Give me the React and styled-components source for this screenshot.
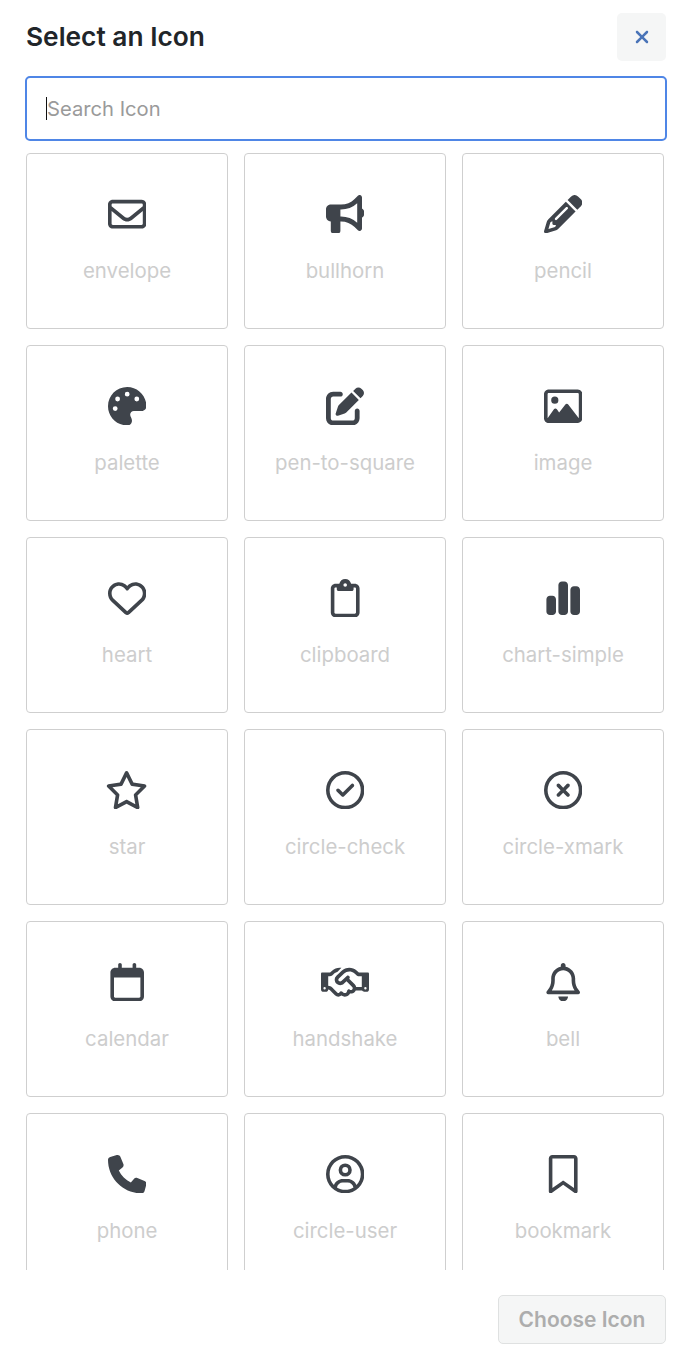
import React from "react";
import styled, { createGlobalStyle } from "styled-components";
import {
  FaRegEnvelope,
  FaBullhorn,
  FaPencil,
  FaPalette,
  FaPenToSquare,
  FaRegImage,
  FaRegHeart,
  FaRegClipboard,
  FaChartSimple,
  FaRegStar,
  FaRegCircleCheck,
  FaRegCircleXmark,
  FaRegCalendar,
  FaRegHandshake,
  FaRegBell,
  FaPhone,
  FaRegCircleUser,
  FaRegBookmark,
  FaXmark,
} from "react-icons/fa6";

// ratio: glyph width / height, only the two wider-than-square icons need it
const icons = [
  ["envelope", FaRegEnvelope],
  ["bullhorn", FaBullhorn],
  ["pencil", FaPencil],
  ["palette", FaPalette],
  ["pen-to-square", FaPenToSquare],
  ["image", FaRegImage],
  ["heart", FaRegHeart],
  ["clipboard", FaRegClipboard],
  ["chart-simple", FaChartSimple],
  ["star", FaRegStar, 1.125],
  ["circle-check", FaRegCircleCheck],
  ["circle-xmark", FaRegCircleXmark],
  ["calendar", FaRegCalendar],
  ["handshake", FaRegHandshake, 1.25],
  ["bell", FaRegBell],
  ["phone", FaPhone],
  ["circle-user", FaRegCircleUser],
  ["bookmark", FaRegBookmark],
];

export default function App() {
  return (
    <Modal>
      <GlobalStyle />
      <Header>
        <Title>Select an Icon</Title>
        <CloseButton aria-label="Close">
          <FaXmark />
        </CloseButton>
      </Header>
      <SearchBox>
        <SearchInput placeholder="Search Icon" readOnly />
        <Caret />
      </SearchBox>
      <IconList>
        <IconGrid>
          {icons.map(([name, Icon, ratio]) => (
            <IconCard key={name}>
              <IconWrap $ratio={ratio || 1}>
                <Icon />
              </IconWrap>
              <IconName>{name}</IconName>
            </IconCard>
          ))}
        </IconGrid>
      </IconList>
      <Footer>
        <ChooseButton>Choose Icon</ChooseButton>
      </Footer>
    </Modal>
  );
}

const GlobalStyle = createGlobalStyle`
  html, body {
    margin: 0;
    padding: 0;
    background: #fff;
  }
  * {
    box-sizing: border-box;
  }
`;

const Modal = styled.div`
  width: 696px;
  height: 1362px;
  padding: 13px 30px 0 26px;
  background: #fff;
  font-family: Inter, "Liberation Sans", sans-serif;
  overflow: hidden;
`;

const Header = styled.div`
  display: flex;
  align-items: center;
  justify-content: space-between;
  height: 48px;
  margin-bottom: 15px;
`;

const Title = styled.h2`
  margin: 0 0 2px;
  font-size: 26.3px;
  font-weight: 600;
  color: #212529;
`;

const CloseButton = styled.button`
  display: flex;
  align-items: center;
  justify-content: center;
  width: 49px;
  height: 48px;
  padding: 0;
  border: none;
  border-radius: 5px;
  background: #f5f6f6;
  color: #4a74b8;
  font-size: 20px;
`;

const SearchBox = styled.div`
  position: relative;
  width: 642px;
  height: 65px;
  margin-left: -1px;
  margin-bottom: 12px;
`;

const SearchInput = styled.input`
  display: block;
  width: 100%;
  height: 100%;
  padding: 0 20px;
  border: 2px solid #4f86e6;
  border-radius: 5px;
  outline: none;
  font-family: inherit;
  font-size: 20.2px;
  color: #212529;

  &::placeholder {
    color: #9a9a9a;
    opacity: 1;
  }
`;

const Caret = styled.span`
  position: absolute;
  left: 21px;
  top: 21px;
  width: 1px;
  height: 23px;
  background: #111;
`;

const IconList = styled.div`
  height: 1117px;
  overflow: hidden;
`;

const IconGrid = styled.div`
  display: grid;
  grid-template-columns: repeat(3, 202px);
  grid-auto-rows: 176px;
  gap: 16px;
`;

const IconCard = styled.div`
  display: flex;
  flex-direction: column;
  align-items: center;
  padding-top: 40px;
  border: 1px solid #cfcfcf;
  border-radius: 4px;
`;

const IconWrap = styled.div`
  display: flex;
  align-items: center;
  justify-content: center;
  height: 40px;
  margin-bottom: 22px;
  font-size: 38.4px;
  color: #3f444b;

  svg {
    height: 1em;
    width: ${(p) => p.$ratio}em;
  }
`;

const IconName = styled.div`
  font-size: 20.4px;
  line-height: 30px;
  color: #cdcdcd;
`;

const Footer = styled.div`
  display: flex;
  justify-content: flex-end;
  padding-top: 25px;
`;

const ChooseButton = styled.button`
  width: 168px;
  height: 49px;
  padding: 0;
  border: 1px solid #dfe1e1;
  border-radius: 5px;
  background: #f5f6f6;
  font-family: inherit;
  font-size: 21px;
  font-weight: 600;
  color: #adadad;
`;
